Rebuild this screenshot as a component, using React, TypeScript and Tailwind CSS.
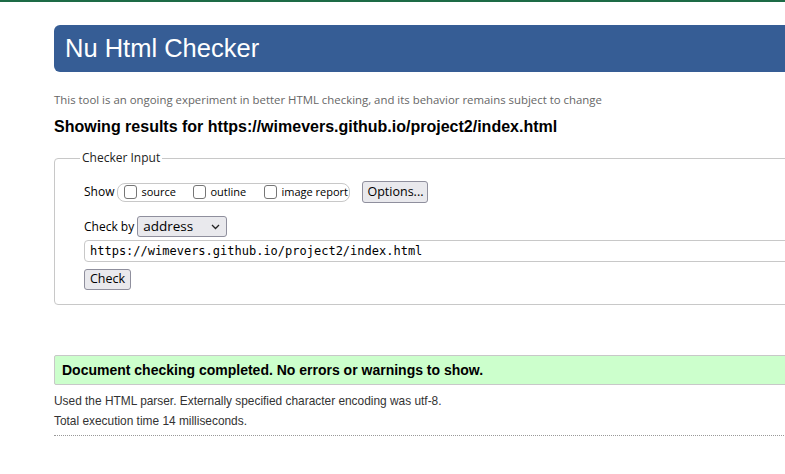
import React from 'react';

const ui = "font-['Open_Sans',sans-serif]";
const arial = "font-['Liberation_Sans',Arial,sans-serif]";

function Box({ label, w }: { label: string; w: string }) {
  return (
    <label className={`flex shrink-0 items-center gap-[4px] whitespace-nowrap ${w}`}>
      <span className="inline-block h-[14px] w-[13px] shrink-0 rounded-[3px] border border-[#767676] bg-white" />
      <span>{label}</span>
    </label>
  );
}

export default function App() {
  return (
    <div className={`h-[474px] w-[785px] overflow-hidden bg-white ${arial}`}>
      <div className="h-[2px] w-full bg-[#1d6b46]" />
      <div className="ml-[54px] w-[900px] pt-[23px]">
        <div className="flex h-[47px] items-center rounded-l-[6px] bg-[#365d95] pl-[11px]">
          <h1 className="text-[25.5px] leading-none text-white">Nu Html Checker</h1>
        </div>

        <p className={`mt-[21px] text-[11.4px] leading-[14px] text-[#666] ${ui}`}>
          This tool is an ongoing experiment in better HTML checking, and its behavior remains subject to change
        </p>
        <h2 className="mt-[11px] text-[16px] font-bold leading-[18px] text-black">
          Showing results for https://wimevers.github.io/project2/index.html
        </h2>

        <fieldset className={`mt-[15px] h-[154px] rounded-[4px] border border-[#c8c8c8] pl-[29px] text-[12px] text-black ${ui}`}>
          <legend className="-ml-[4px] px-[2px] text-[12px] leading-[14px] text-[#222]">Checker Input</legend>

          <div className="mt-[16px] flex items-center">
            <span className="text-[12px]">Show</span>
            <div className="ml-[3px] flex h-[19px] w-[233px] shrink-0 items-center rounded-[8px] border border-[#c8c8c8] pl-[6px] text-[11px]">
              <Box label="source" w="w-[69px]" />
              <Box label="outline" w="w-[71px]" />
              <Box label="image report" w="" />
            </div>
            <button className="ml-[12px] h-[22px] w-[66px] rounded-[3px] border border-[#8f8f9d] bg-[#e9e9ed] text-[12.5px] leading-none">
              Options...
            </button>
          </div>

          <div className="mt-[13px] flex items-center">
            <span className="text-[12px]">Check by</span>
            <div className="ml-[3px] flex h-[21px] w-[90px] items-center justify-between rounded-[3px] border border-[#8f8f9d] bg-[#e9e9ed] pl-[5px] pr-[6px]">
              <span className="text-[13.5px] leading-none">address</span>
              <svg width="9" height="6" viewBox="0 0 9 6" fill="none" stroke="#222" strokeWidth="1.3">
                <path d="M1 1l3.5 3.5L8 1" />
              </svg>
            </div>
          </div>

          <div className="mt-[3px] flex h-[22px] items-center rounded-l-[4px] border border-[#c8c8c8] pl-[5px] font-['DejaVu_Sans_Mono',monospace] text-[12px]">
            https://wimevers.github.io/project2/index.html
          </div>

          <button className="mt-[7px] h-[21px] w-[47px] rounded-[3px] border border-[#8f8f9d] bg-[#e9e9ed] text-[12.5px] leading-none">
            Check
          </button>
        </fieldset>

        <div className="mt-[50px] flex h-[30px] items-center rounded-l-[2px] border border-[#c8c8c8] bg-[#ccffcc] pl-[7px]">
          <p className="text-[14px] font-bold text-black">Document checking completed. No errors or warnings to show.</p>
        </div>
        <p className="mt-[9px] text-[11.9px] leading-[14px] text-[#333]">
          Used the HTML parser. Externally specified character encoding was utf-8.
        </p>
        <p className="mt-[6px] text-[11.9px] leading-[14px] text-[#333]">Total execution time 14 milliseconds.</p>
        <div className="mt-[7px] border-t border-dotted border-[#999]" />
      </div>
    </div>
  );
}
